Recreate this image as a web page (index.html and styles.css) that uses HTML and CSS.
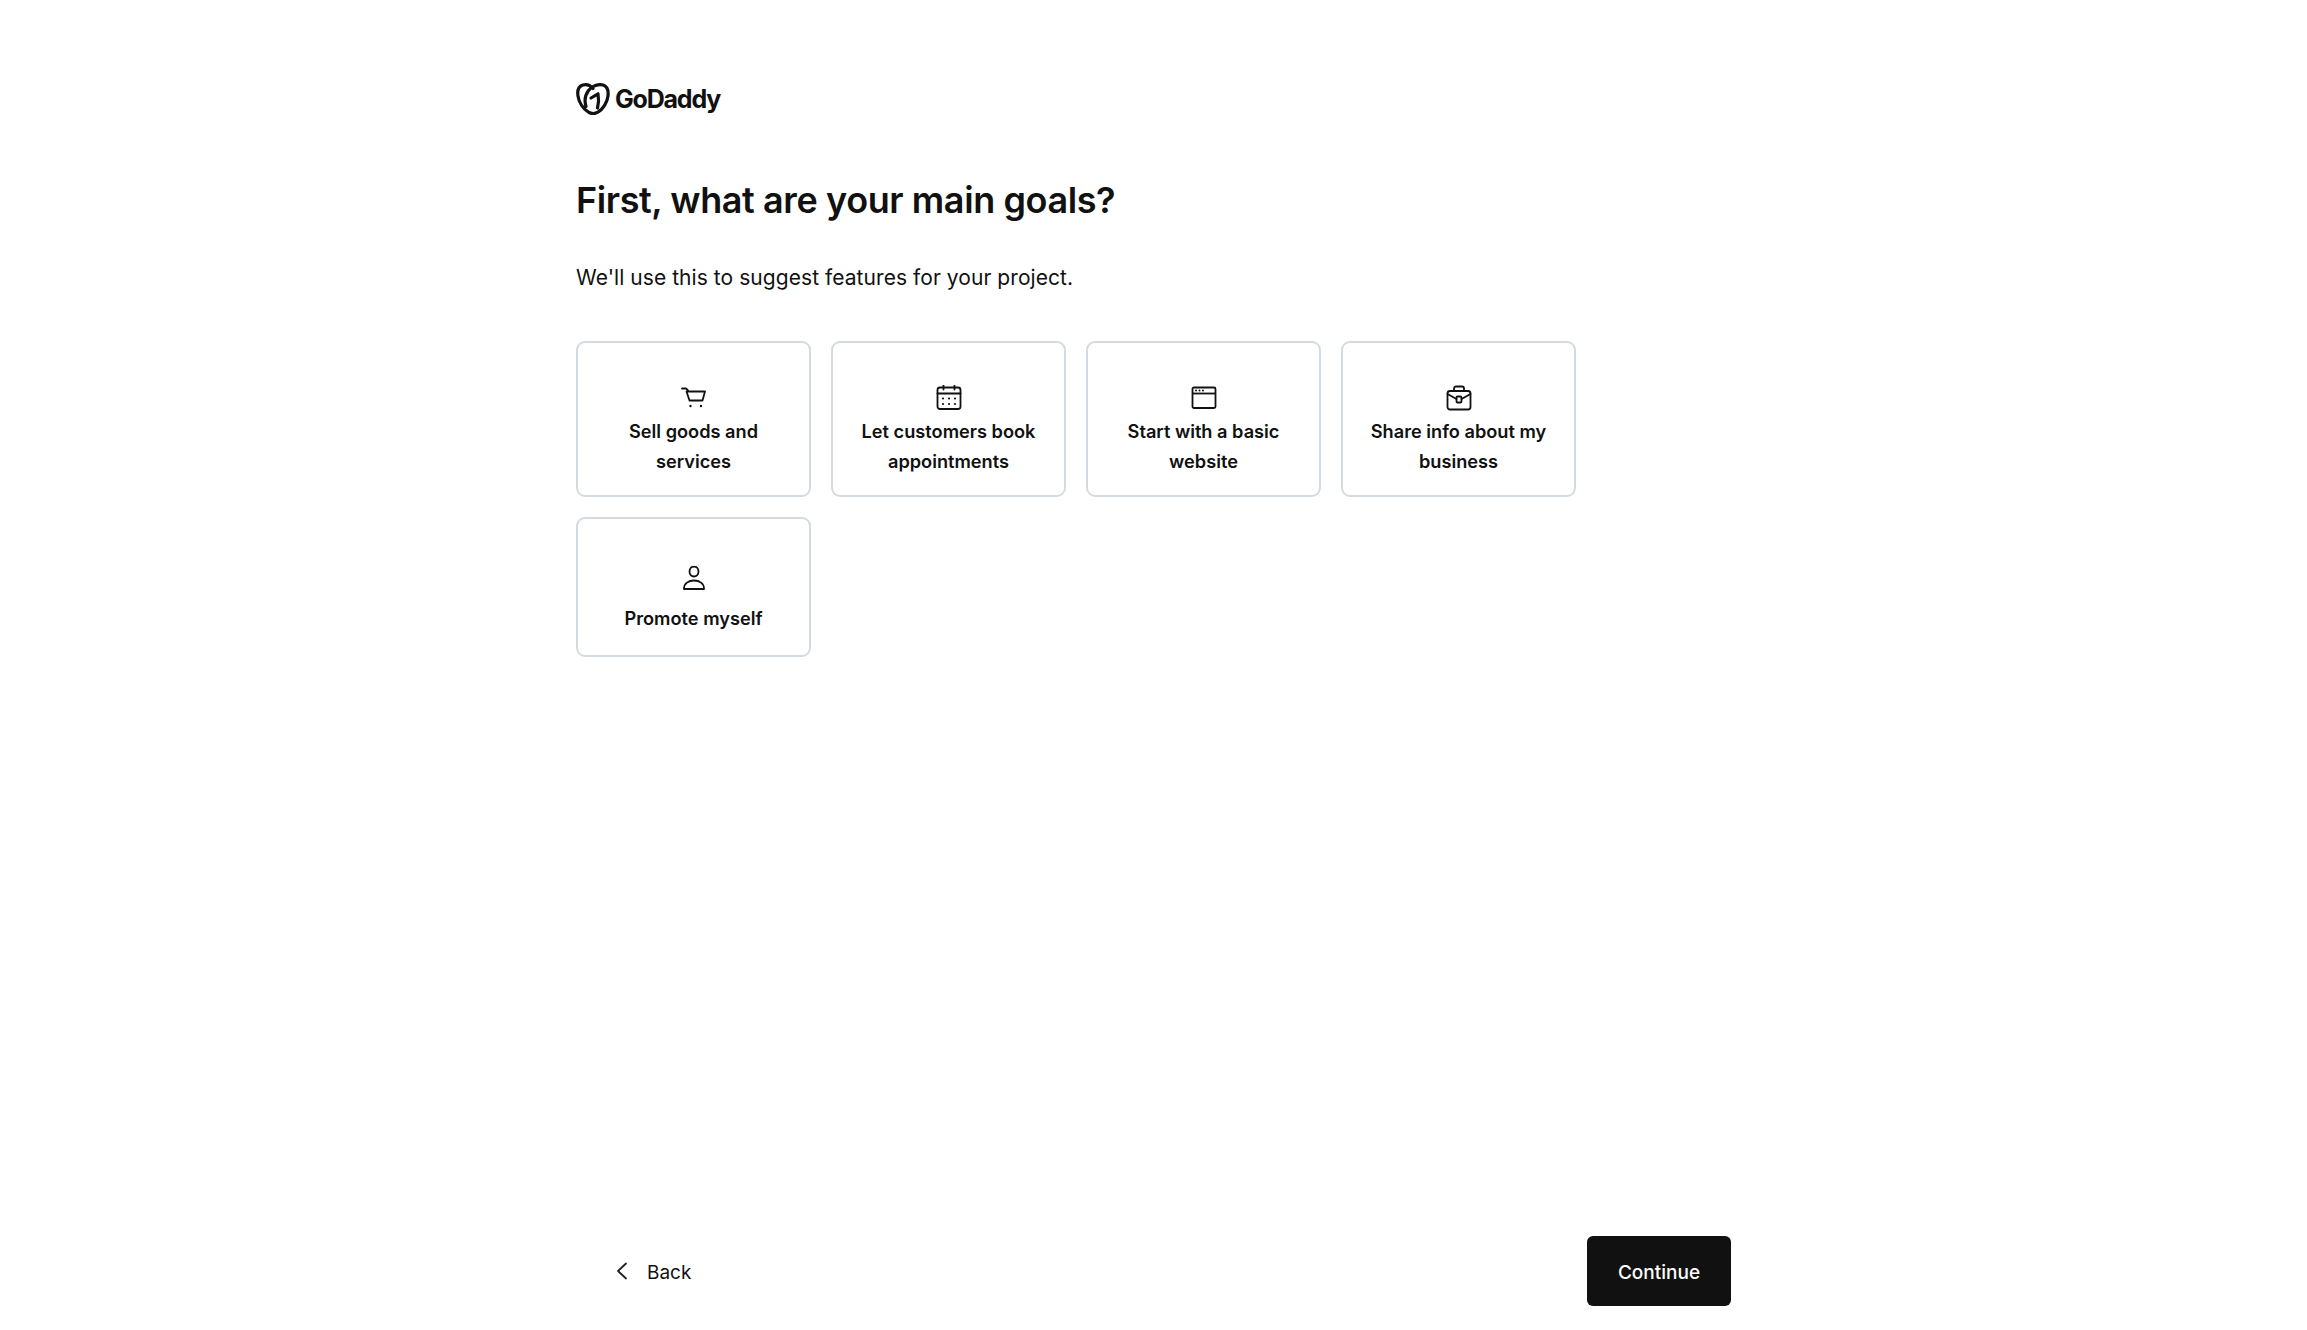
FILE: index.html
```html
<!DOCTYPE html>
<html lang="en">
<head>
  <meta charset="UTF-8">
  <meta name="viewport" content="width=device-width, initial-scale=1.0">
  <title>GoDaddy - Goals</title>
  <link rel="stylesheet" href="styles.css">
</head>
<body>
  <div class="page">
    <header class="logo">
      <svg class="logo-mark" viewBox="0 0 34 32" fill="none" stroke="#111" stroke-width="3.2" stroke-linecap="round" stroke-linejoin="round">
        <path d="M17 5.5C14.5 2.6 10.5 0.9 6.8 2.1C2.6 3.5 1.2 8 2 13C2.9 19.5 7.3 26 12.5 29.2C15.5 31 19 30.9 22 29.2C27 26.3 31.2 19.5 32 13C32.6 8 31.2 3.5 27.2 2.1C22.5 0.6 16 3 12.5 7.5C9.3 11.8 8.2 17.6 10 23.5"/>
        <path d="M15 15L22 10.8C22.8 15 22.8 20 21.5 25"/>
      </svg>
      <span class="logo-text">GoDaddy</span>
    </header>

    <main class="content">
      <h1>First, what are your main goals?</h1>
      <p class="subtitle">We'll use this to suggest features for your project.</p>

      <div class="goals">
        <button class="goal">
          <svg class="icon" viewBox="0 0 26 22" fill="none" stroke="#111" stroke-width="1.8" stroke-linecap="round" stroke-linejoin="round">
            <path d="M1 1.5H5L7 3.5"/>
            <path d="M5.5 4.5H24L21.5 13.5H8.5L5.5 4.5Z"/>
            <circle cx="9.5" cy="19" r="1.2" fill="#111" stroke="none"/>
            <circle cx="20" cy="19" r="1.2" fill="#111" stroke="none"/>
          </svg>
          <span>Sell goods and services</span>
        </button>
        <button class="goal">
          <svg class="icon" viewBox="0 1 26 26" fill="none" stroke="#111" stroke-width="1.8" stroke-linejoin="round" stroke-linecap="round">
            <rect x="1.5" y="3.5" width="23" height="21.5" rx="2.5"/>
            <path d="M1.5 9.5H24.5M7.5 1V5.5M18.5 1V5.5"/>
            <g fill="#111" stroke="none">
              <circle cx="7" cy="14.5" r="1.1"/><circle cx="13" cy="14.5" r="1.1"/><circle cx="19" cy="14.5" r="1.1"/>
              <circle cx="7" cy="20" r="1.1"/><circle cx="13" cy="20" r="1.1"/><circle cx="19" cy="20" r="1.1"/>
            </g>
          </svg>
          <span>Let customers book appointments</span>
        </button>
        <button class="goal">
          <svg class="icon" viewBox="0 0 26 26" fill="none" stroke="#111" stroke-width="1.8" stroke-linejoin="round">
            <rect x="1.5" y="2.5" width="23" height="20.5" rx="1.5"/>
            <path d="M1.5 8.5H24.5"/>
            <g fill="#111" stroke="none">
              <circle cx="5" cy="5.5" r="1"/><circle cx="8.5" cy="5.5" r="1"/><circle cx="12" cy="5.5" r="1"/>
            </g>
          </svg>
          <span>Start with a basic website</span>
        </button>
        <button class="goal">
          <svg class="icon" viewBox="0 0 26 26" fill="none" stroke="#111" stroke-width="1.8" stroke-linejoin="round" stroke-linecap="round">
            <rect x="1.5" y="6" width="23" height="18.5" rx="2.5"/>
            <path d="M8 6V3.5C8 2.3 8.8 1.5 10 1.5H16C17.2 1.5 18 2.3 18 3.5V6"/>
            <path d="M1.5 9L10.5 14M24.5 9L15.5 14"/>
            <rect x="10.5" y="11.5" width="5" height="6" rx="1"/>
          </svg>
          <span>Share info about my business</span>
        </button>
        <button class="goal goal-single">
          <svg class="icon" viewBox="0 1 26 26" fill="none" stroke="#111" stroke-width="1.8" stroke-linejoin="round">
            <ellipse cx="13" cy="6.5" rx="4.5" ry="5"/>
            <path d="M3 23.5C3 18.5 7.5 15.5 13 15.5C18.5 15.5 23 18.5 23 23.5V24H3V23.5Z"/>
          </svg>
          <span>Promote myself</span>
        </button>
      </div>
    </main>

    <footer class="footer">
      <button class="back">
        <svg class="chevron" viewBox="0 0 12 18" fill="none" stroke="#222" stroke-width="1.8" stroke-linecap="round" stroke-linejoin="round">
          <path d="M10 1.5L2 9L10 16.5"/>
        </svg>
        <span>Back</span>
      </button>
      <button class="continue">Continue</button>
    </footer>
  </div>
</body>
</html>
```

FILE: styles.css
```css
:root {
  --color-text: #111111;
  --color-border: #d4dbe0;
}

* {
  box-sizing: border-box;
}

body {
  margin: 0;
  background-color: #ffffff;
  color: var(--color-text);
  font-family: Inter, "Open Sans", sans-serif;
}

.page {
  width: 1155px;
  height: 1330px;
  margin: 0 auto;
  padding-top: 82px;
  padding-bottom: 24px;
  display: flex;
  flex-direction: column;
}

.logo {
  display: flex;
  align-items: center;
  gap: 5px;
  height: 34px;
}

.logo-mark {
  width: 34px;
  height: 32px;
}

.logo-text {
  font-size: 25px;
  font-weight: 700;
  letter-spacing: -1.2px;
}

.content {
  flex: 1;
}

h1 {
  margin: 60px 0 0;
  font-size: 36px;
  line-height: 48px;
  font-weight: 600;
  letter-spacing: -0.4px;
}

.subtitle {
  margin: 39px 0 0;
  font-size: 21px;
  line-height: 30px;
  letter-spacing: 0.06px;
  font-weight: 400;
}

.goals {
  margin-top: 48px;
  display: grid;
  grid-template-columns: repeat(4, 235px);
  gap: 20px;
}

.goal {
  height: 156px;
  padding: 42px 15px 0;
  display: flex;
  flex-direction: column;
  align-items: center;
  background: #ffffff;
  border: 2px solid var(--color-border);
  border-radius: 9px;
  color: var(--color-text);
  font-family: inherit;
  font-size: 18.2px;
  line-height: 30px;
  font-weight: 600;
  text-align: center;
}

.goal-single {
  height: 140px;
  padding-top: 47px;
}

.goal-single .icon {
  margin-bottom: 11px;
}

.icon {
  width: 26px;
  height: 26px;
  margin-bottom: 5px;
  flex: none;
}

.footer {
  display: flex;
  justify-content: space-between;
  align-items: center;
}

.back {
  display: flex;
  align-items: center;
  gap: 19px;
  padding: 0 0 0 40px;
  border: none;
  background: none;
  color: var(--color-text);
  font-family: inherit;
  font-size: 19px;
}

.back span {
  padding-top: 2px;
}

.chevron {
  width: 12px;
  height: 18px;
}

.continue {
  width: 144px;
  height: 70px;
  padding: 2px 0 0;
  border: none;
  border-radius: 6px;
  background-color: var(--color-text);
  color: #ffffff;
  font-family: inherit;
  font-size: 19px;
  font-weight: 500;
}
```
